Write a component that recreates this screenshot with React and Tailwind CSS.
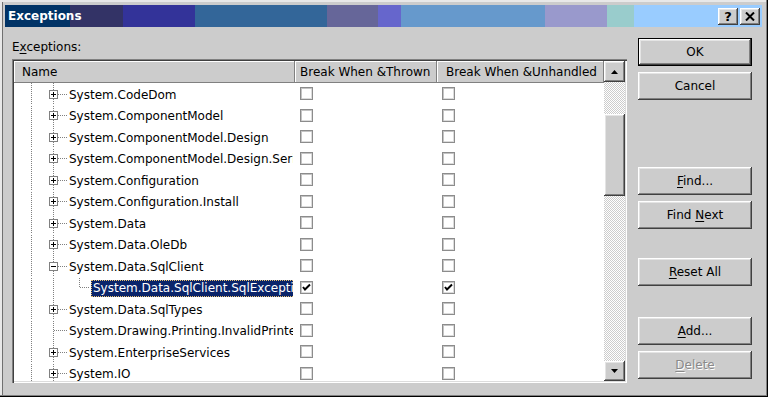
import React from 'react';

const rows = [
  { name: 'System.CodeDom', box: 'plus' },
  { name: 'System.ComponentModel', box: 'plus' },
  { name: 'System.ComponentModel.Design', box: 'plus' },
  { name: 'System.ComponentModel.Design.Serialization', box: 'plus' },
  { name: 'System.Configuration', box: 'plus' },
  { name: 'System.Configuration.Install', box: 'plus' },
  { name: 'System.Data', box: 'plus' },
  { name: 'System.Data.OleDb', box: 'plus' },
  { name: 'System.Data.SqlClient', box: 'minus' },
  { name: 'System.Data.SqlClient.SqlException', child: true, selected: true, checked: true },
  { name: 'System.Data.SqlTypes', box: 'plus' },
  { name: 'System.Drawing.Printing.InvalidPrinterException', box: null },
  { name: 'System.EnterpriseServices', box: 'plus' },
  { name: 'System.IO', box: 'plus' },
];

const titleBands = [
  ['w-[65px]', 'bg-[#003366]'],
  ['w-[53px]', 'bg-[#333366]'],
  ['w-[72px]', 'bg-[#333399]'],
  ['w-[132px]', 'bg-[#336699]'],
  ['w-[51px]', 'bg-[#666699]'],
  ['w-[23px]', 'bg-[#6666cc]'],
  ['w-[144px]', 'bg-[#6699cc]'],
  ['w-[62px]', 'bg-[#9999cc]'],
  ['w-[27px]', 'bg-[#99cccc]'],
];

const raised =
  'shadow-[inset_-1px_-1px_#404040,inset_1px_1px_#ffffff,inset_-2px_-2px_#808080,inset_2px_2px_#e4e4e4]';

function TreeLines({ row }) {
  const c = 11.5;
  if (row.child) {
    return (
      <svg width="77" height="22" className="shrink-0">
        <line x1="17.5" y1="0" x2="17.5" y2="22" stroke="#808080" strokeDasharray="1 1" />
        <line x1="39.5" y1="0" x2="39.5" y2="22" stroke="#808080" strokeDasharray="1 1" />
        <line x1="65.5" y1="0" x2="65.5" y2={c} stroke="#808080" strokeDasharray="1 1" />
        <line x1="66" y1={c} x2="76" y2={c} stroke="#808080" strokeDasharray="1 1" />
      </svg>
    );
  }
  return (
    <svg width="55" height="22" className="shrink-0">
      <line x1="17.5" y1="0" x2="17.5" y2="22" stroke="#808080" strokeDasharray="1 1" />
      <line x1="39.5" y1="0" x2="39.5" y2="22" stroke="#808080" strokeDasharray="1 1" />
      <line x1="40" y1={c} x2="54" y2={c} stroke="#808080" strokeDasharray="1 1" />
      {row.box && (
        <g>
          <rect x="35.5" y={c - 4} width="8" height="8" fill="#ffffff" stroke="#808080" />
          <line x1="37" y1={c} x2="42" y2={c} stroke="#000000" />
          {row.box === 'plus' && <line x1="39.5" y1={c - 2.5} x2="39.5" y2={c + 2.5} stroke="#000000" />}
        </g>
      )}
    </svg>
  );
}

function Check({ on }) {
  return (
    <div className="w-[13px] h-[13px] bg-white border border-[#8c8c8c] shadow-[inset_1px_1px_#c4c4c4,inset_-1px_-1px_#dcdcdc] flex items-center justify-center">
      {on && (
        <svg width="9" height="9" viewBox="0 0 9 9">
          <path d="M1 4 L3 6.5 L8 1.5" fill="none" stroke="#000000" strokeWidth="2" />
        </svg>
      )}
    </div>
  );
}

function Button({ children, top, isDefault, disabled }) {
  return (
    <div className={`${top} h-[28px] w-[114px] ${isDefault ? 'border border-black' : ''} bg-[#cccccc]`}>
      <div
        className={`w-full h-full flex items-center justify-center text-[12px] ${raised} ${
          disabled ? 'text-[#8a8a8a] [text-shadow:1px_1px_0_#ffffff]' : 'text-black'
        }`}
      >
        <span className="whitespace-pre">{children}</span>
      </div>
    </div>
  );
}

function U({ children }) {
  return <span className="underline decoration-1 underline-offset-[2px]">{children}</span>;
}

export default function App() {
  return (
    <div className="w-[768px] h-[399px] bg-white font-['DejaVu_Sans',sans-serif]">
      <div className="w-[768px] h-[397px] bg-[#cccccc] pt-[5px] pl-[5px] pr-[6px] shadow-[inset_-1px_-1px_#000000,inset_-2px_-2px_#808080,inset_2px_2px_#e8e8e8,inset_3px_0_#707070] flex flex-col">
        {/* title bar */}
        <div className="h-[22px] flex bg-[#99ccff] relative">
          {titleBands.map(([w, bg], i) => (
            <div key={i} className={`${w} ${bg} h-full shrink-0`} />
          ))}
          <div className="flex-1" />
          <div className="absolute inset-0 flex items-center pl-[3px] pr-[2px]">
            <span className="text-white font-bold text-[12px] flex-1">Exceptions</span>
            <div className={`w-[20px] h-[17px] bg-[#cccccc] ${raised} flex items-center justify-center text-[13px] font-bold text-black leading-none`}>
              ?
            </div>
            <div className={`ml-[2px] w-[20px] h-[17px] bg-[#cccccc] ${raised} flex items-center justify-center`}>
              <svg width="10" height="9" viewBox="0 0 10 9">
                <path d="M1 0.5 L9 8.5 M9 0.5 L1 8.5" stroke="#000000" strokeWidth="2" />
              </svg>
            </div>
          </div>
        </div>

        {/* body */}
        <div className="flex flex-1">
          <div className="pl-[7px] pt-[12px]">
            <div className="h-[16px] text-[12px] leading-[16px] text-black">
              E<U>x</U>ceptions:
            </div>
            <div className="mt-[4px] w-[615px] h-[324px] bg-white shadow-[inset_1px_1px_#808080,inset_2px_2px_#404040,inset_-1px_-1px_#ffffff,inset_-2px_-2px_#dcdcdc] p-[2px] flex">
              <div className="flex-1 overflow-hidden">
                {/* header */}
                <div className="h-[22px] flex text-[12px] text-black bg-[#cccccc]">
                  <div className="w-[281px] h-full pl-[8px] flex items-center shadow-[inset_-1px_-1px_#808080,inset_1px_1px_#ffffff]">Name</div>
                  <div className="w-[142px] h-full pl-[5px] flex items-center shadow-[inset_-1px_-1px_#808080,inset_1px_1px_#ffffff] whitespace-nowrap">Break When &amp;Thrown</div>
                  <div className="flex-1 h-full pl-[9px] flex items-center shadow-[inset_-1px_-1px_#808080,inset_1px_1px_#ffffff] whitespace-nowrap overflow-hidden">Break When &amp;Unhandled</div>
                </div>
                {/* rows */}
                {rows.map((row, i) => (
                  <div key={i} className="h-[21.5px] flex items-center text-[12px] text-black">
                    <div className="w-[279px] h-full flex items-center overflow-hidden whitespace-nowrap">
                      <TreeLines row={row} />
                      {row.selected ? (
                        <span className="mt-[2px] bg-[#0a246a] text-white px-[1px] h-[17px] leading-[15px] border border-dotted border-[#e8c070]">{row.name}</span>
                      ) : (
                        <span className="pt-[2px]">{row.name}</span>
                      )}
                    </div>
                    <div className="w-[144px] pl-[7px]">
                      <Check on={row.checked} />
                    </div>
                    <div className="flex-1 pl-[5px]">
                      <Check on={row.checked} />
                    </div>
                  </div>
                ))}
              </div>
              {/* scrollbar */}
              <div className="w-[21px] h-full flex flex-col">
                <div className={`h-[21px] bg-[#cccccc] ${raised} flex items-center justify-center`}>
                  <svg width="7" height="4" viewBox="0 0 7 4"><path d="M3.5 0 L7 4 L0 4 Z" fill="#000000" /></svg>
                </div>
                <div className="h-[32px] bg-[repeating-conic-gradient(#ffffff_0%_25%,#cccccc_0%_50%)] bg-[length:2px_2px]" />
                <div className={`h-[82px] bg-[#cccccc] ${raised}`} />
                <div className="flex-1 bg-[repeating-conic-gradient(#ffffff_0%_25%,#cccccc_0%_50%)] bg-[length:2px_2px]" />
                <div className={`h-[20px] bg-[#cccccc] ${raised} flex items-center justify-center`}>
                  <svg width="7" height="4" viewBox="0 0 7 4"><path d="M0 0 L7 0 L3.5 4 Z" fill="#000000" /></svg>
                </div>
              </div>
            </div>
          </div>

          <div className="ml-[11px] pt-[11px] flex flex-col">
            <Button top="" isDefault>OK</Button>
            <Button top="mt-[6px]">Cancel</Button>
            <Button top="mt-[67px]"><U>F</U>ind...</Button>
            <Button top="mt-[6px]">Find <U>N</U>ext</Button>
            <Button top="mt-[29px]"><U>R</U>eset All</Button>
            <Button top="mt-[31px]"><U>A</U>dd...</Button>
            <Button top="mt-[6px]" disabled><U>D</U>elete</Button>
          </div>
        </div>
      </div>
    </div>
  );
}
